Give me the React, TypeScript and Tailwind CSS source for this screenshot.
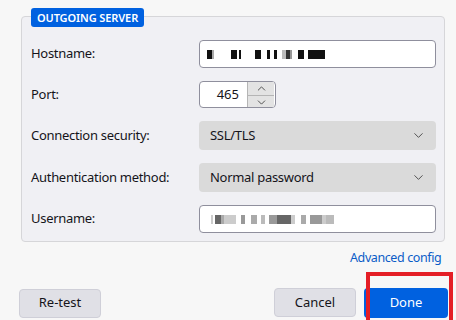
import { ChevronDown, ChevronUp } from "lucide-react";

const font = { fontFamily: '"Noto Sans", "Open Sans", sans-serif' };

// [width, colour] pairs; "transparent" acts as spacing
function Redacted({ blocks }: { blocks: [number, string][] }) {
  return (
    <span className="flex items-center">
      {blocks.map(([w, c], i) => (
        <span key={i} className="inline-block h-[9px]" style={{ width: w, background: c }} />
      ))}
    </span>
  );
}

function Row({ label, children }: { label: string; children: React.ReactNode }) {
  return (
    <div className="flex items-center">
      <span className="w-[168px] text-[13px] tracking-[-0.3px] text-[#15141a]">{label}</span>
      {children}
    </div>
  );
}

function Select({ value }: { value: string }) {
  return (
    <div className="flex h-[29px] w-[237px] items-center justify-between rounded-[4px] bg-[#dadada] pl-[11px] pr-[10px] text-[13px] tracking-[-0.3px] text-[#15141a]">
      <span>{value}</span>
      <ChevronDown size={15} strokeWidth={1.3} className="text-[#333]" />
    </div>
  );
}

export default function App() {
  return (
    <div className="relative h-[320px] w-[456px] overflow-hidden bg-[#f7f7f7]" style={font}>
      <div className="absolute left-[21px] top-[16px] h-[226px] w-[424px] rounded-[4px] border border-[#d6d6d9] bg-[#f0f0f4]">
        <span className="absolute left-[9px] top-[-9px] h-[19px] rounded-[3px] bg-[#0061e0] px-[6px] text-[11px] font-semibold leading-[19px] tracking-[-0.1px] text-white">
          OUTGOING SERVER
        </span>
        <div className="flex flex-col gap-[13px] pl-[9px] pt-[23px]">
          <Row label="Hostname:">
            <div className="flex h-[28px] w-[237px] items-center rounded-[4px] border border-[#8f8f9d] bg-white pl-[7px]">
              <Redacted
                blocks={[
                  [5, "#111"],
                  [2, "#aaa"],
                  [17, "transparent"],
                  [6, "#111"],
                  [2, "transparent"],
                  [2, "#111"],
                  [14, "transparent"],
                  [6, "#111"],
                  [6, "transparent"],
                  [3, "#111"],
                  [4, "transparent"],
                  [3, "#111"],
                  [5, "transparent"],
                  [4, "#bbb"],
                  [4, "#333"],
                  [2, "#999"],
                  [6, "transparent"],
                  [6, "#111"],
                  [4, "transparent"],
                  [17, "#111"],
                ]}
              />
            </div>
          </Row>
          <Row label="Port:">
            <div className="flex h-[27px] w-[77px] items-center rounded-[4px] border border-[#8f8f9d] bg-white">
              <span className="flex-1 pr-[8px] text-right text-[13px] text-[#15141a]">465</span>
              <div className="mr-[1px] flex h-[25px] w-[27px] flex-col border-l border-[#b5b5b5] bg-[#e3e3e3]">
                <div className="flex flex-1 items-center justify-center border-b border-[#b5b5b5]">
                  <ChevronUp size={13} strokeWidth={1.5} className="text-[#333]" />
                </div>
                <div className="flex flex-1 items-center justify-center">
                  <ChevronDown size={13} strokeWidth={1.5} className="text-[#333]" />
                </div>
              </div>
            </div>
          </Row>
          <Row label="Connection security:">
            <Select value="SSL/TLS" />
          </Row>
          <Row label="Authentication method:">
            <Select value="Normal password" />
          </Row>
          <Row label="Username:">
            <div className="flex h-[28px] w-[237px] items-center rounded-[4px] border border-[#8f8f9d] bg-white pl-[11px]">
              <Redacted
                blocks={[
                  [2, "#ccc"],
                  [2, "transparent"],
                  [6, "#666"],
                  [3, "#aaa"],
                  [12, "#ccc"],
                  [5, "transparent"],
                  [4, "#999"],
                  [6, "transparent"],
                  [6, "#aaa"],
                  [4, "transparent"],
                  [4, "#bbb"],
                  [4, "transparent"],
                  [8, "#999"],
                  [14, "#666"],
                  [4, "#ccc"],
                  [6, "transparent"],
                  [5, "#aaa"],
                  [4, "transparent"],
                  [12, "#999"],
                  [4, "#ccc"],
                  [8, "#bbb"],
                ]}
              />
            </div>
          </Row>
        </div>
      </div>

      <span className="absolute left-[350px] top-[249px] text-[12.5px] tracking-[-0.4px] text-[#0b5cc7]">
        Advanced config
      </span>

      <div className="absolute left-[19px] right-[8px] top-[288px] flex items-center">
        <button className="h-[29px] w-[82px] rounded-[4px] border border-[#cfcfd8] bg-[#e0e0e6] text-[13px] text-[#15141a]">
          Re-test
        </button>
        <div className="ml-auto flex gap-[8px]">
          <button className="h-[29px] w-[82px] rounded-[4px] border border-[#cfcfd8] bg-[#e0e0e6] text-[13px] text-[#15141a]">
            Cancel
          </button>
          <button className="h-[30px] w-[84px] rounded-[4px] bg-[#0061e0] text-[13px] text-white">Done</button>
        </div>
      </div>

      <div className="absolute left-[366px] top-[272px] h-[52px] w-[87px] border-[4px] border-[#e41e26]" />
    </div>
  );
}
